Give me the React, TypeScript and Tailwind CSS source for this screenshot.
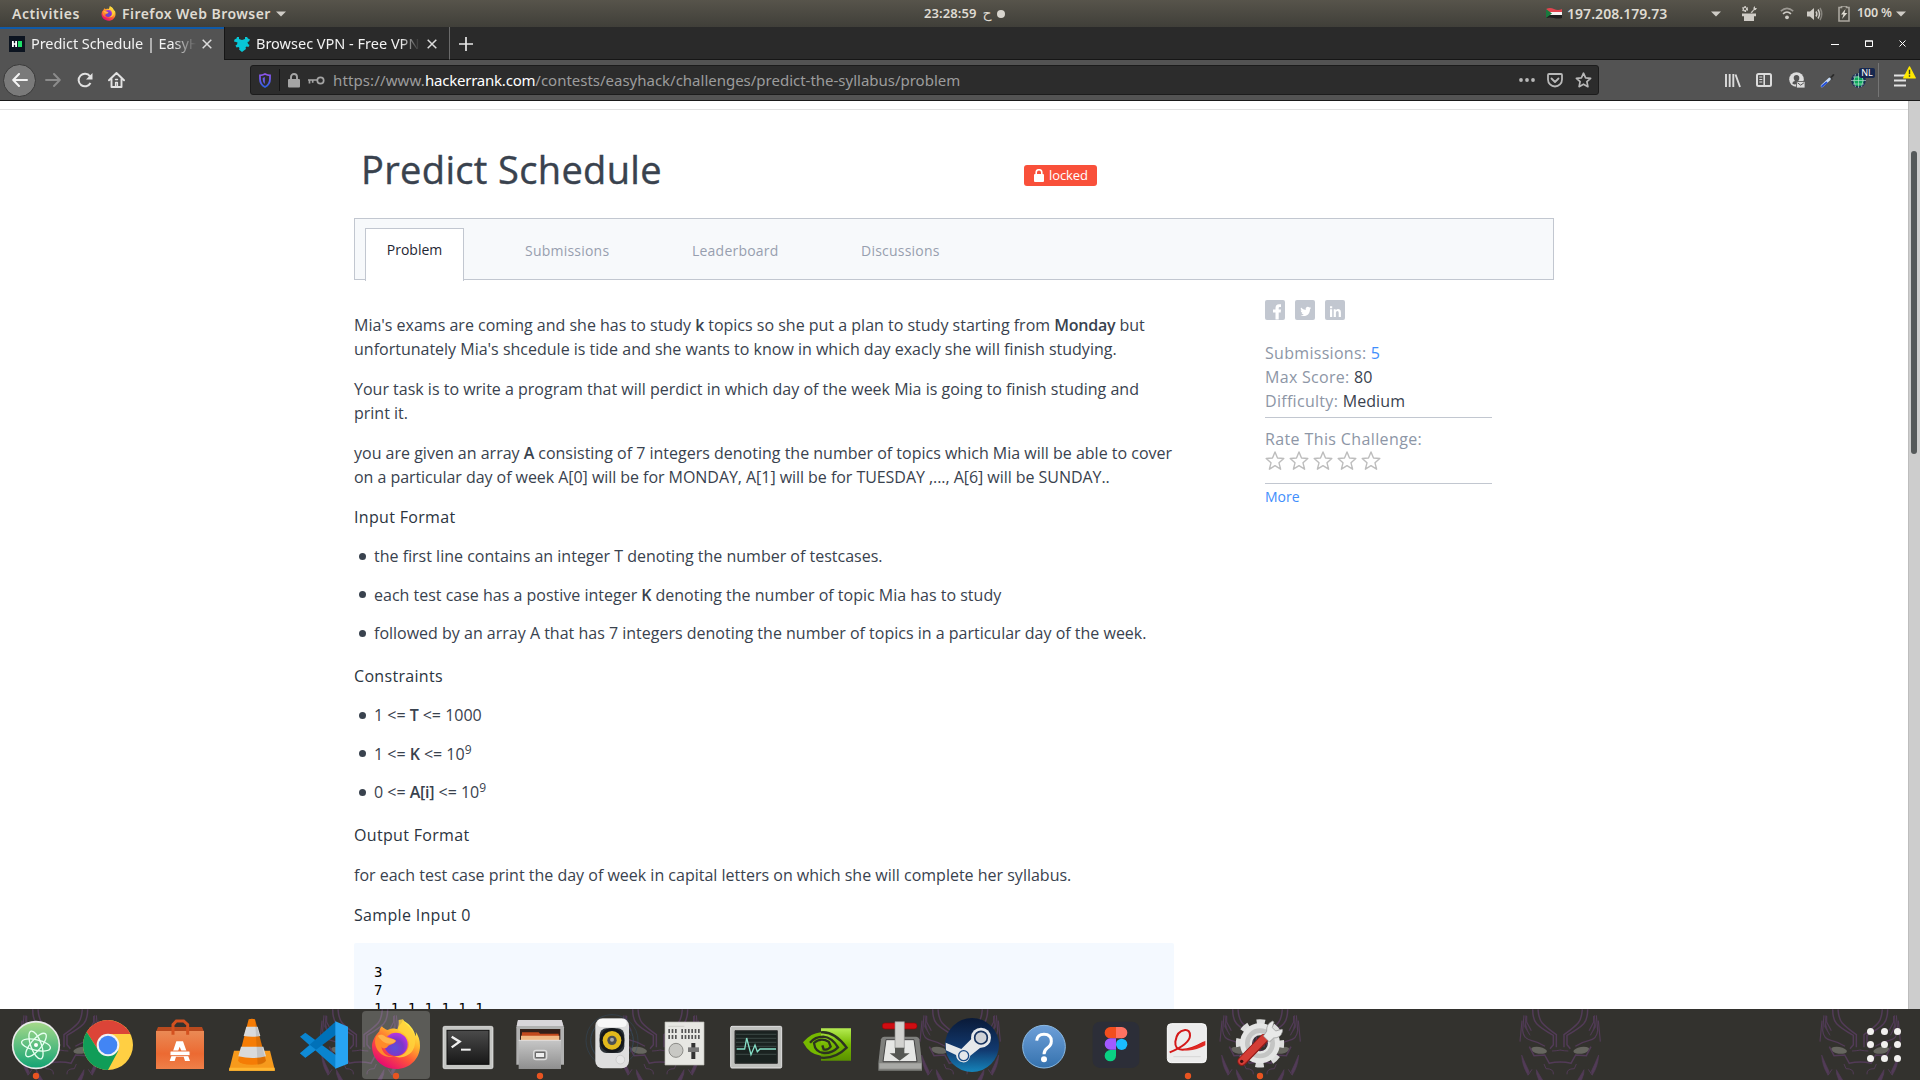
import type { ReactNode } from "react";

const UI = "font-['Noto_Sans','DejaVu_Sans',sans-serif]";

function Caret() {
  return (
    <svg width="10" height="6" viewBox="0 0 10 6" className="shrink-0">
      <path d="M0 .5h10L5 5.5z" fill="#cfccc6" />
    </svg>
  );
}

function FirefoxArt() {
  return (
    <>
      <defs>
        <linearGradient id="ffBody" x1=".8" y1=".1" x2=".25" y2=".95">
          <stop offset="0" stopColor="#fff44f" />
          <stop offset=".3" stopColor="#ffb52c" />
          <stop offset=".6" stopColor="#ff5a36" />
          <stop offset="1" stopColor="#e60a71" />
        </linearGradient>
        <radialGradient id="ffGlobe" cx=".45" cy=".65" r=".6">
          <stop offset="0" stopColor="#5b50d8" />
          <stop offset=".6" stopColor="#7d37c9" />
          <stop offset="1" stopColor="#b035df" />
        </radialGradient>
      </defs>
      <path
        d="M1209 58c-2 13-12 17-17 30-6-4-20-4-30 2-7-3-13-6-16-11-5 4-7 9-8 15-13 13-22 30-22 45 0 38 31 68 72 68s72-31 72-70c0-18-5-30-13-42 2 7 1 11 0 14-5-22-20-37-30-43-6-3-8-5-8-8z"
        fill="url(#ffBody)"
      />
      <circle cx="1188" cy="133" r="35" fill="url(#ffGlobe)" />
      <path d="M1196 60c2 18-4 20 0 32 16 6 33 21 31 42-3 24-24 38-45 34 14 9 42 3 55-15 18-26 4-60-12-75-8-8-13-11-16-20z" fill="#ffd23c" opacity=".85" />
      <path d="M1128 110c8-9 19-9 29-2 10 7 24 6 31 14-3 9-14 9-24 16-4 9-16 8-20 2 4 22 20 31 41 29-26 8-51-8-58-31-2-9-3-20 1-28z" fill="#ff8a2b" />
      <path d="M1134 107c8-4 15-3 22 3 9 6 24 5 31 13-6 8-13 8-19 8-13 0-20-6-26-13-4-4-7-7-8-11z" fill="#ffb24a" />
    </>
  );
}

function TopBar() {
  return (
    <div className="grid h-[27px] grid-cols-[1fr_auto_1fr] bg-linear-to-b from-[#57544b] to-[#403f39] text-[14px] font-semibold text-[#dfdbd2]">
      <div className="flex items-center pl-[12px]">
        <span className="w-[89px] tracking-[0.55px]">Activities</span>
        <svg width="15" height="15" viewBox="1114 56 148 154" className="mr-[6px]">
          <FirefoxArt />
        </svg>
        <span className="tracking-[0.45px]">Firefox Web Browser</span>
        <span className="ml-[5px] flex">
          <Caret />
        </span>
      </div>
      <div className="flex w-[84px] translate-x-[6px] items-center gap-[6px]">
        <span className="text-[13px] tracking-[0.1px]">23:28:59</span>
        <span className="w-[9px] shrink-0 font-['DejaVu_Sans',sans-serif] text-[14px] font-normal">ح</span>
        <span className="-ml-px size-[8px] shrink-0 rounded-full bg-[#d8d5ce]" />
      </div>
      <div className="flex items-center justify-end pr-[14px]">
        <svg width="16" height="11" viewBox="0 0 16 11" className="mr-[5px]">
          <path d="M0 1q4-2 8 0t8 0v3H0z" fill="#e0444f" />
          <path d="M0 4h16v3H0z" fill="#f4f4f4" />
          <path d="M0 7h16v3q-4 1-8 0t-8 0z" fill="#1f1f1f" />
          <path d="M0 1l6 4.500-6 4.500z" fill="#197a3e" />
        </svg>
        <span className="w-[144px] text-[14px] tracking-[0.05px]">197.208.179.73</span>
        <Caret />
        <svg width="16" height="17" viewBox="0 0 16 17" className="ml-[20px]" fill="#cfccc6">
          <circle cx="4" cy="4" r="2.300" fill="none" stroke="#cfccc6" strokeWidth="1.500" strokeDasharray="1.400 .9" />
          <circle cx="4" cy="4" r="1.600" fill="none" stroke="#cfccc6" />
          <path d="M9.500 7.500l3-3V2.500L14 1v2h2L14.700 5 13 5.300 11 8zM1 8.500h14v2.700H1zM3 11.200h10V16H3z" />
        </svg>
        <svg width="14" height="13" viewBox="0 0 14 13" className="ml-[23px]" fill="none" stroke="#cfccc6" strokeWidth="1.600">
          <path d="M.8 4.200Q7-1.300 13.200 4.200" opacity=".6" />
          <path d="M3 6.800q4-3.600 8 0" />
          <circle cx="7" cy="10.300" r="1.900" fill="#cfccc6" stroke="none" />
        </svg>
        <svg width="16" height="14" viewBox="0 0 16 14" className="ml-[13px]" fill="none" stroke="#cfccc6" strokeWidth="1.500">
          <path d="M0 4.500h3L7 1v12L3 9.500H0z" fill="#cfccc6" stroke="none" />
          <path d="M9 4.500q1.700 2.500 0 5M11 2.500q3 4.500 0 9" />
          <path d="M13 1q3.500 6 0 12" opacity=".45" />
        </svg>
        <svg width="12" height="16" viewBox="0 0 12 16" className="ml-[15px]">
          <path d="M3.500 1.500V0h5v1.500H11V15H1V1.500z" fill="none" stroke="#aaa79f" strokeWidth="1.600" />
          <path d="M7.500 3L3 8.500h2.500L4 13l5.300-6H6.500z" fill="#dfdbd2" />
        </svg>
        <span className="mr-[5px] ml-[7px] w-[34px] text-[12.500px] tracking-[-0.2px] whitespace-nowrap">100 %</span>
        <Caret />
      </div>
    </div>
  );
}

function CloseX() {
  return (
    <svg width="10" height="10" viewBox="0 0 10 10" className="shrink-0">
      <path d="M.7.7l8.600 8.600M9.300.7L.7 9.300" stroke="#dcdcdc" strokeWidth="1.500" />
    </svg>
  );
}

function TabStrip() {
  return (
    <div className="flex h-[33px] bg-[#2a2a2a] text-[15px] text-[#f2f2f2]">
      <div className="flex w-[224px] items-center border-t-2 border-[#0f5aa8] bg-[#535353] pb-[2px] pl-[9px]">
        <svg width="16" height="16" viewBox="0 0 16 16" className="shrink-0">
          <path d="M0 0h16v16H0z" fill="#0c1420" />
          <path d="M3 5h1.800v2.200h1.400V5H8v6H6.200V8.800H4.800V11H3z" fill="#fff" />
          <path d="M9 5h4v6H9z" fill="#1ee068" />
        </svg>
        <span className="ml-[6px] w-[165px] overflow-hidden mask-r-from-86% mask-r-to-100% text-[14.500px] tracking-[-0.06px] whitespace-nowrap">
          Predict Schedule | EasyHack
        </span>
        <span className="ml-[6px]">
          <CloseX />
        </span>
      </div>
      <div className="flex w-[226px] items-center border-r border-b border-l border-r-[#6a6a6a] border-b-[#161616] border-l-[#161616] pt-[1px] pl-[9px]">
        <svg width="16" height="16" viewBox="0 0 16 16" className="shrink-0" fill="#08c6d6">
          <path d="M3 1h2v2l3 1 3-1V1h2l1 1.500 2 1-1 2-1.500.5.500 2 1.500 1-1 2-2-.5-1 1 .5 1.500L8 16l-3-2.500.5-1.500-1-1-2 .5-1-2L3 8.500l.500-2L2 6 0 5.500l.500-2L2.500 2.500z" />
        </svg>
        <span className="ml-[6px] w-[164px] overflow-hidden mask-r-from-88% mask-r-to-100% text-[14.500px] whitespace-nowrap">
          Browsec VPN - Free VPN
        </span>
        <span className="ml-[7px]">
          <CloseX />
        </span>
      </div>
      <div className="flex flex-1 items-center justify-between border-b border-[#161616] pt-px pr-[14px] pl-[9px]">
        <svg width="14" height="14" viewBox="0 0 14 14">
          <path d="M7 0v14M0 7h14" stroke="#e8e8e8" strokeWidth="1.700" />
        </svg>
        <div className="flex items-center gap-[26px]">
          <svg width="8" height="8" viewBox="0 0 8 8"><path d="M0 4.500h8" stroke="#fff" /></svg>
          <svg width="8" height="7" viewBox="0 0 8 7"><path d="M.5 1h7v5.500h-7zM0 1h8" fill="none" stroke="#fff" /></svg>
          <svg width="7" height="7" viewBox="0 0 7 7"><path d="M.5.5l6 6M6.500.5l-6 6" stroke="#fff" /></svg>
        </div>
      </div>
    </div>
  );
}

function NavBar() {
  return (
    <div className="flex h-[41px] items-center border-b border-[#1a1a1a] bg-[#535353]">
      <div className="ml-[3px] flex size-[33px] items-center justify-center rounded-full border border-[#3a3a3a] bg-[#7a7a7a]">
        <svg width="16" height="14" viewBox="0 0 16 14" fill="none" stroke="#f3f3f3" strokeWidth="2" strokeLinecap="round" strokeLinejoin="round">
          <path d="M15 7H1.500M7 1L1.200 7 7 13" />
        </svg>
      </div>
      <svg width="16" height="14" viewBox="0 0 16 14" className="ml-[9px]" fill="none" stroke="#8c8c8c" strokeWidth="1.900" strokeLinecap="round" strokeLinejoin="round">
        <path d="M1 7h13.500M9 1l5.800 6L9 13" />
      </svg>
      <svg width="16" height="16" viewBox="0 0 16 16" className="ml-[16px]">
        <path d="M13.500 11A6.300 6.300 0 1 1 13 4.300" fill="none" stroke="#e2e2e2" strokeWidth="2" />
        <path d="M15.500 1v6.500H9z" fill="#e2e2e2" />
      </svg>
      <svg width="17" height="16" viewBox="0 0 17 16" className="ml-[15px]" fill="none" stroke="#e2e2e2" strokeWidth="1.900" strokeLinejoin="round" strokeLinecap="round">
        <path d="M1 8.300L8.500 1 16 8.300M3.500 7v8h10V7" />
        <path d="M7.600 15v-4.500h1.800V15M7.500 7.500h2" strokeWidth="1.400" />
      </svg>
      <div className="ml-[125px] flex h-[30px] w-[1349px] items-center rounded-[3px] border border-[#1c1c1c] bg-[#2c2c2c] pl-[8px]">
        <svg width="12" height="15" viewBox="0 0 12 15">
          <defs>
            <linearGradient id="shield" x1="0" y1="0" x2="0" y2="1">
              <stop offset="0" stopColor="#8f55ec" />
              <stop offset="1" stopColor="#2f5fe0" />
            </linearGradient>
          </defs>
          <path d="M6 1Q3.500 2.300 1 2.300V6q0 5.500 5 8 5-2.500 5-8V2.300Q8.500 2.300 6 1z" fill="none" stroke="url(#shield)" strokeWidth="1.800" />
          <path d="M5.800 4v7Q3.600 9.300 3.700 5z" fill="#6a5ce8" />
        </svg>
        <span className="ml-[8px] h-[22px] w-px bg-[#151515]" />
        <svg width="12" height="15" viewBox="0 0 12 15" className="ml-[8px]">
          <path d="M0 7q0-1 1-1h10q1 0 1 1v6.500q0 1-1 1H1q-1 0-1-1z" fill="#a5a5a5" />
          <path d="M3 7V4a3 3 0 0 1 6 0v3" fill="none" stroke="#a5a5a5" strokeWidth="1.900" />
        </svg>
        <svg width="17" height="9" viewBox="0 0 17 9" className="ml-[8px]" fill="none" stroke="#a5a5a5" strokeWidth="1.700">
          <circle cx="12.500" cy="4.500" r="3.200" />
          <path d="M9.200 4H0M1.500 4v3.500M4.700 4v2.700" />
        </svg>
        <div className="ml-[8px] flex-1 text-[15px] whitespace-nowrap text-[#9c9c9c]">
          <span className="tracking-[0.12px]">https://www.</span>
          <span className="tracking-[-0.22px] text-white">hackerrank.com</span>
          <span className="tracking-[-0.01px]">/contests/easyhack/challenges/predict-the-syllabus/problem</span>
        </div>
        <div className="mr-[6px] flex items-center">
          <svg width="16" height="4" viewBox="0 0 16 4" fill="#b8b8b8">
            <circle cx="2" cy="2" r="1.900" /><circle cx="8" cy="2" r="1.900" /><circle cx="14" cy="2" r="1.900" />
          </svg>
          <svg width="16" height="15" viewBox="0 0 16 15" className="ml-[12px]" fill="none" stroke="#b8b8b8" strokeWidth="1.800" strokeLinecap="round" strokeLinejoin="round">
            <path d="M2 1h12q1 0 1 1v4.500a7 7 0 0 1-14 0V2q0-1 1-1z" />
            <path d="M4.500 5.500L8 9l3.500-3.500" />
          </svg>
          <svg width="17" height="16" viewBox="0 0 17 16" className="ml-[12px]" fill="none" stroke="#b8b8b8" strokeWidth="1.700" strokeLinejoin="round">
            <path d="M8.500 1.200l2.100 4.600 5 .5-3.700 3.400 1 5-4.400-2.500-4.400 2.500 1-5L1.400 6.300l5-.5z" />
          </svg>
        </div>
      </div>
      <svg width="16" height="15" viewBox="0 0 16 15" className="ml-[126px]" fill="none" stroke="#dcdcdc" strokeWidth="1.900">
        <path d="M1 1v13M4.700 1v13M8.300 1v13M10.500 1.500L15 14" />
      </svg>
      <svg width="16" height="14" viewBox="0 0 16 14" className="ml-[15px]" fill="none" stroke="#dcdcdc">
        <rect x="1" y="1" width="14" height="12" rx="1.500" strokeWidth="2" />
        <path d="M8.200 1v12" strokeWidth="1.600" />
        <path d="M3.300 4h3M3.300 6.500h3M3.300 9h3" strokeWidth="1" />
      </svg>
      <svg width="16" height="16" viewBox="0 0 16 16" className="ml-[17px]">
        <circle cx="7.500" cy="7.500" r="7.300" fill="#dcdcdc" />
        <path d="M7.500 3a3 3 0 0 1 2.800 3.200q0 1.500-1 2.500v2q-3 3-6 .8L4 9.800q2-.2 1.800-1.300Q4.600 7.400 4.700 6A3 3 0 0 1 7.500 3z" fill="#535353" />
        <path d="M7.500 9.500H16V16H7.500z" fill="#dcdcdc" stroke="#535353" strokeWidth=".8" />
        <path d="M8.500 10.800l3.200 2.400 3.200-2.400" fill="none" stroke="#535353" />
      </svg>
      <svg width="15" height="15" viewBox="0 0 15 15" className="ml-[15px]">
        <path d="M8.500 6.500l4-5q1.500-1 2 .5l-4.500 5z" fill="#1d1d1d" opacity=".75" />
        <path d="M9.500 3.500l3 3" stroke="#3a3a3a" strokeWidth="1.500" />
        <path d="M9.500 6L2 13" stroke="#c9dcf5" strokeWidth="2.600" strokeLinecap="round" />
        <path d="M6.500 9.500L2 13.200" stroke="#2550d8" strokeWidth="1.900" strokeLinecap="round" />
      </svg>
      <div className="relative ml-[16px] h-[15px] w-[16px]">
        <svg width="15" height="15" viewBox="0 0 15 15">
          <circle cx="7.500" cy="7.500" r="7.300" fill="#1c2c55" />
          <circle cx="7.500" cy="8" r="5.200" fill="#0ea85b" />
          <path d="M7.500 0v15M0 7.500h15M2 4h11M2 11h11M4.500 1q-3 6.500 0 13M10.500 1q3 6.500 0 13" fill="none" stroke="#c7e7dc" strokeWidth=".6" />
        </svg>
        <span className="absolute -top-[5px] left-[8px] flex h-[10px] w-[16px] items-center justify-center rounded-[2px] bg-[#17284f] text-[9px] leading-none text-white">NL</span>
      </div>
      <span className="ml-[11px] h-[34px] w-px bg-[#757575]" />
      <div className="relative ml-[15px] h-[13px] w-[12px]">
        <svg width="12" height="13" viewBox="0 0 12 13"><path d="M0 1.500h12M0 6.500h12M0 11.500h12" stroke="#e2e2e2" strokeWidth="2" /></svg>
        <svg width="13" height="13" viewBox="0 0 13 13" className="absolute -top-[8px] left-[9px]">
          <path d="M6.500.8L12.300 12H.7z" fill="#ffe900" stroke="#ffe900" strokeWidth="1.200" strokeLinejoin="round" />
          <path d="M6.500 3.800v4.400M6.500 9.300v1.500" stroke="#3e3e20" strokeWidth="1.400" />
        </svg>
      </div>
    </div>
  );
}

function Bullets({ items }: { items: ReactNode[] }) {
  return (
    <ul className="mt-[15px] flex flex-col gap-[14.500px]">
      {items.map((it, i) => (
        <li key={i} className="flex h-[24px] items-center">
          <span className="mr-[8px] ml-[5px] size-[7px] rounded-full bg-[#39424e]" />
          <span>{it}</span>
        </li>
      ))}
    </ul>
  );
}

function B({ children }: { children: ReactNode }) {
  return <span className="font-semibold tracking-[-0.25px] text-[#39424e]">{children}</span>;
}

function Sup() {
  return <sup className="-top-[6px] text-[12px]">9</sup>;
}

function Heading({ children, className = "" }: { children: ReactNode; className?: string }) {
  return <h3 className={`font-medium tracking-[0.32px] text-[#2b3440] ${className}`}>{children}</h3>;
}

function Statement() {
  return (
    <div className="w-[820px] pt-[33px] text-[16px] leading-[24px] whitespace-nowrap text-[#39424e]">
      <p>
        Mia's exams are coming and she has to study <B>k</B> topics so she put a plan to study starting from <B>Monday</B> but
        <br />
        unfortunately Mia's shcedule is tide and she wants to know in which day exacly she will finish studying.
      </p>
      <p className="mt-[16px]">
        Your task is to write a program that will perdict in which day of the week Mia is going to finish studing and
        <br />
        print it.
      </p>
      <p className="mt-[16px]">
        you are given an array <B>A</B> consisting of 7 integers denoting the number of topics which Mia will be able to cover
        <br />
        <span className="tracking-[-0.05px]">on a particular day of week A[0] will be for MONDAY, A[1] will be for TUESDAY ,..., A[6] will be SUNDAY..</span>
      </p>
      <Heading className="mt-[16px]">Input Format</Heading>
      <Bullets
        items={[
          "the first line contains an integer T denoting the number of testcases.",
          <>each test case has a postive integer <B>K</B> denoting the number of topic Mia has to study</>,
          "followed by an array A that has 7 integers denoting the number of topics in a particular day of the week.",
        ]}
      />
      <Heading className="mt-[19px]">Constraints</Heading>
      <Bullets
        items={[
          <>1 &lt;= <B>T</B> &lt;= 1000</>,
          <>1 &lt;= <B>K</B> &lt;= 10<Sup /></>,
          <>0 &lt;= <B>A[i]</B> &lt;= 10<Sup /></>,
        ]}
      />
      <Heading className="mt-[19px]">Output Format</Heading>
      <p className="mt-[16px]">for each test case print the day of week in capital letters on which she will complete her syllabus.</p>
      <Heading className="mt-[16px]">Sample Input 0</Heading>
      <pre className="mt-[16px] h-[160px] rounded-[2px] bg-[#f4f9ff] px-[20px] pt-[20px] font-['DejaVu_Sans_Mono',monospace] text-[14px] leading-[18px] text-black">
        {"3\n7\n1 1 1 1 1 1 1"}
      </pre>
    </div>
  );
}

function Social({ children }: { children: ReactNode }) {
  return (
    <svg width="20" height="20" viewBox="0 0 20 20">
      <rect width="20" height="20" rx="2" fill="#c2c7d0" />
      {children}
    </svg>
  );
}

function Sidebar() {
  return (
    <aside className="ml-[91px] w-[227px] pt-[20px] text-[16px] leading-[24px] tracking-[0.3px] text-[#8d96a6]">
      <div className="flex gap-[10px]">
        <Social><path d="M10.500 19.500v-7H8v-3h2.500V8q0-3.800 3.500-3.800h2v2.800h-1.300q-1 0-1 1v1.500H16l-.3 3h-2v7z" fill="#fff" /></Social>
        <Social><path d="M5.500 14.500q2 .1 3.300-1-1.700-.2-2.300-1.600h1q-1.800-.7-1.800-2.500l1 .2Q5 8.200 6 6.500q2 2.300 4.700 2.400-.3-3 2.100-3.200.9 0 1.600.7l1.500-.6-1 1.400 1.300-.3-1.200 1.300q0 4.500-3.500 6.300-3 1.200-6-.0z" fill="#fff" transform="translate(0 1)" /></Social>
        <Social><path d="M5 9.300h2.200V17H5zM5 6.300h2.200v2H5zM8.700 9.300h2v1q2-2 4-.8 1.200.8 1.200 2.700V17h-2.200v-4.300q0-1.700-1.300-1.700-1.500 0-1.500 1.800V17H8.700z" fill="#fff" /></Social>
      </div>
      <div className="mt-[21px]">Submissions: <span className="text-[#3f8efc]">5</span></div>
      <div>Max Score: <span className="tracking-normal text-[#39424e]">80</span></div>
      <div>Difficulty: <span className="tracking-[0.1px] text-[#39424e]">Medium</span></div>
      <div className="mt-[4px] border-t border-[#c2c7d0] pt-[9px] tracking-[0.38px]">Rate This Challenge:</div>
      <div className="-mt-px flex h-[21px] gap-[4px]">
        {[0, 1, 2, 3, 4].map((i) => (
          <svg key={i} width="20" height="21" viewBox="0 0 20 21" fill="none" stroke="#bdbdbd" strokeWidth="1.400" strokeLinejoin="round">
            <path d="M10 2l2.500 6 6.300.5L14 12.800l1.600 6.400-5.600-3.500-5.600 3.500L6 12.800 1.200 8.500 7.500 8z" />
          </svg>
        ))}
      </div>
      <div className="mt-[12px] border-t border-[#c2c7d0] pt-[1px] text-[14px] tracking-normal text-[#3f8efc]">More</div>
    </aside>
  );
}

function Page() {
  return (
    <div className="flex h-[908px] bg-white font-['Open_Sans','Noto_Sans',sans-serif]">
      <div className="flex-1 overflow-hidden">
        <div className="h-[9px] border-b border-[#e2e2e2]" />
        <div className="ml-[354px] w-[1200px]">
          <div className="flex h-[108px] items-start">
            <h1 className="ml-[7px] w-[663px] pt-[33px] text-[38px] leading-[52px] tracking-[0.35px] text-[#39424e] [-webkit-text-stroke:0.4px_#39424e]">Predict Schedule</h1>
            <span className="mt-[55px] flex h-[21px] w-[73px] items-center rounded-[3px] bg-[#f9503a] pl-[10px] text-[13px] tracking-[-0.1px] text-white">
              <svg width="10" height="13" viewBox="0 0 10 13" className="mr-[5px]">
                <path d="M0 6q0-1 1-1h8q1 0 1 1v6q0 1-1 1H1q-1 0-1-1z" fill="#fff" />
                <path d="M2.200 6V3.500a2.800 2.800 0 0 1 5.600 0V6" fill="none" stroke="#fff" strokeWidth="1.600" />
              </svg>
              locked
            </span>
          </div>
          <div className="flex h-[62px] items-end border border-[#c2c7d0] bg-[#f7f9fb] text-[14px] tracking-[0.22px] text-[#979faf]">
            <div className="-mb-[2px] ml-[10px] flex h-[53px] w-[99px] items-center justify-center border border-b-0 border-[#c2c7d0] bg-white pb-[11px] font-medium tracking-normal text-[#1f2733]">Problem</div>
            <div className="flex h-[60px] flex-1 items-center pt-[2px]">
              <span className="ml-[61px] w-[167px]">Submissions</span>
              <span className="w-[169px]">Leaderboard</span>
              <span>Discussions</span>
            </div>
          </div>
          <div className="flex">
            <Statement />
            <Sidebar />
          </div>
        </div>
      </div>
      <div className="w-[12px] border-l border-[#bdbdbd] bg-[#cdcdcd] pt-[50px] pl-[2px]">
        <div className="h-[303px] w-[6px] rounded-full bg-[#55595a]" />
      </div>
    </div>
  );
}

function Mask() {
  return (
    <svg width="300" height="71" viewBox="-150 27 900 213" className="shrink-0">
      <ellipse cx="237" cy="151" rx="24" ry="10" transform="rotate(9 237 151)" fill="#66665f" />
      <ellipse cx="364" cy="151" rx="24" ry="10" transform="rotate(-9 364 151)" fill="#66665f" />
      {[0, 1].map((s) => (
        <g key={s} transform={s ? "translate(601 0) scale(-1 1)" : undefined} fill="none" stroke="#523b57" strokeWidth="4.500">
          <path d="M218 28q0 30 12 43t50 35v28l-10 12M234 28q2 28 12 40t43 36v38" />
          <path d="M208 140l14 27 32-2 14 25q15-4 33-4" />
          <path d="M192 46l-4 45q2 25 25 30t42 18M186 62l-6 63M200 48v18l14 26" strokeWidth="3.500" />
          <path d="M198 46q-6 30 12 60l-16-26z" fill="#523b57" strokeWidth="2" />
          <path d="M185 165q2 34 19 60l3-11q-10-20-22-49z" fill="#523b57" strokeWidth="2" />
          <path d="M229 209l20 33h-12l-7-20z" fill="#523b57" strokeWidth="2" />
          <path d="M204 226l12-18M252 192l6 14q24 0 22 17M276 153q12 0 25-3" strokeWidth="3" />
        </g>
      ))}
    </svg>
  );
}

const icons: { off: number; dot?: boolean; active?: boolean; art: ReactNode }[] = [
  {
    off: 0, dot: true,
    art: (
      <>
        <linearGradient id="atom" x1="0" y1="0" x2="0" y2="1"><stop offset="0" stopColor="#a7d98a" /><stop offset="1" stopColor="#12a374" /></linearGradient>
        <circle cx="108" cy="135" r="70" fill="url(#atom)" stroke="#e9e9e9" strokeWidth="5" />
        <g fill="none" stroke="#e6fff0" strokeWidth="4">
          <ellipse cx="108" cy="135" rx="44" ry="16" transform="rotate(12 108 135)" />
          <ellipse cx="108" cy="135" rx="44" ry="16" transform="rotate(70 108 135)" />
          <ellipse cx="108" cy="135" rx="44" ry="16" transform="rotate(130 108 135)" />
        </g>
        <circle cx="108" cy="135" r="6" fill="#fff" />
      </>
    ),
  },
  {
    off: 0,
    art: (
      <>
        <circle cx="324" cy="135" r="75" fill="#ffcf43" />
        <path d="M324 135V102h67A75 75 0 0 0 260 96l36 56z" fill="#dc4437" />
        <path d="M260 96A75 75 0 0 0 324 210l31-58-59 0z" fill="#109d58" />
        <path d="M324 210l32-58z" fill="#109d58" />
        <circle cx="324" cy="135" r="34" fill="#f2f2f2" />
        <circle cx="324" cy="135" r="28" fill="#4285f4" />
      </>
    ),
  },
  {
    off: 0,
    art: (
      <>
        <linearGradient id="bag" x1="0" y1="0" x2="0" y2="1"><stop offset="0" stopColor="#ea8a55" /><stop offset=".6" stopColor="#ec6a32" /><stop offset="1" stopColor="#ef8049" /></linearGradient>
        <path d="M474 81h132l6 14H468z" fill="#b94a1e" />
        <path d="M468 93h144v114H468z" fill="url(#bag)" />
        <path d="M519 104V74l10-11h22l12 11v30" fill="none" stroke="#d4511f" strokeWidth="9" />
        <path d="M529 124h20l21 59h-15l-4-13h-23l-4 13h-15zm10 16l-7 20h15z" fill="#fff" />
        <rect x="510" y="153" width="60" height="14" rx="3" fill="#fff" stroke="#e9703c" strokeWidth="3" />
      </>
    ),
  },
  {
    off: 0,
    art: (
      <>
        <path d="M702 152h108l15 60H687z" fill="#f79a1c" />
        <path d="M688 203h136v9H687z" fill="#ffb732" />
        <path d="M746 58q10-3 19 0l33 124q-8 12-42 12t-42-12z" fill="#f57c05" />
        <path d="M739 80h34l8 28q-25 5-50 0zM723 140h67l8 29q-40 10-83 0z" fill="#d9dadb" />
        <path d="M765 58l33 124q-8 12-25 12z" fill="#000" opacity=".1" />
      </>
    ),
  },
  {
    off: 0,
    art: (
      <>
        <path d="M900 110l16-12 92 68v40z" fill="#0a84cf" />
        <path d="M900 160l16 13 92-69V64z" fill="#0071b9" />
        <path d="M1006 64l38 16v111l-38 15z" fill="#27a4f2" />
        <path d="M900 160l16 13 32-24-18-14z" fill="#108bd6" />
      </>
    ),
  },
  { off: 0, dot: true, active: true, art: <FirefoxArt /> },
  {
    off: 0,
    art: (
      <>
        <linearGradient id="term" x1="0" y1="0" x2="0" y2="1"><stop offset="0" stopColor="#4b4b4b" /><stop offset="1" stopColor="#181818" /></linearGradient>
        <rect x="1329" y="79" width="150" height="127" rx="5" fill="#c5c6c3" stroke="#eee" strokeWidth="2" />
        <rect x="1341" y="91" width="126" height="102" fill="url(#term)" stroke="#111" strokeWidth="3" />
        <path d="M1355 110l24 15-24 17" fill="none" stroke="#f0f0f0" strokeWidth="7" />
        <path d="M1383 149h29" stroke="#f0f0f0" strokeWidth="6" />
      </>
    ),
  },
  {
    off: 1470, dot: true,
    art: (
      <>
        <linearGradient id="cab" x1="0" y1="0" x2="0" y2="1"><stop offset="0" stopColor="#c6c6c6" /><stop offset="1" stopColor="#8f8f8f" /></linearGradient>
        <path d="M84 60h131l7 22v112H79V82z" fill="#b1b1b1" />
        <path d="M84 60h131l5 18H80z" fill="#d9d6da" />
        <path d="M90 87h121v36H90z" fill="#33201a" />
        <path d="M96 97h50l4 4h56v22H94z" fill="#c2491d" />
        <path d="M93 107h115v14H93z" fill="#f0b884" />
        <path d="M86 121h127v86H86z" fill="url(#cab)" />
        <path d="M86 121h127" stroke="#e3e3e3" strokeWidth="3" />
        <rect x="131" y="151" width="39" height="28" rx="7" fill="#999" stroke="#ddd" strokeWidth="4" />
        <rect x="137" y="158" width="27" height="14" fill="#eee" stroke="#444" strokeWidth="2" />
      </>
    ),
  },
  {
    off: 1470,
    art: (
      <>
        <g fill="none" stroke="#35506a" strokeWidth="3" opacity=".7"><circle cx="366" cy="122" r="64" /><circle cx="366" cy="122" r="78" opacity=".6" /></g>
        <rect x="316" y="55" width="101" height="150" rx="22" fill="#dedede" />
        <rect x="322" y="57" width="88" height="24" rx="12" fill="#f8f8f8" />
        <rect x="329" y="85" width="74" height="74" rx="20" fill="#2b3136" />
        <circle cx="366" cy="121" r="37" fill="#15181b" />
        <circle cx="366" cy="121" r="28" fill="#e3b91c" />
        <circle cx="366" cy="121" r="14" fill="#4c4f52" />
        <circle cx="366" cy="119" r="6" fill="#aaa" />
        <circle cx="391" cy="179" r="13" fill="#e6e6e6" stroke="#c2c2c2" strokeWidth="2" />
      </>
    ),
  },
  {
    off: 1470,
    art: (
      <>
        <path d="M525 66h117v129H525z" fill="#e7e7e3" stroke="#b9b9b4" strokeWidth="2" />
        <path d="M535 79h48" stroke="#c6c6c0" strokeWidth="2" />
        <path d="M535 93h26M574 93h56M535 111h26M574 111h56" stroke="#555" strokeWidth="12" strokeDasharray="5 5" />
        <circle cx="558" cy="151" r="21" fill="#c8c8c4" stroke="#8c8c88" strokeWidth="3" />
        <path d="M610 129v48" stroke="#333" strokeWidth="12" />
        <path d="M594 142h33v14h-33z" fill="#777" />
      </>
    ),
  },
  {
    off: 1470,
    art: (
      <>
        <rect x="722" y="79" width="153" height="125" rx="4" fill="#bfc0bd" stroke="#e2e2e2" strokeWidth="3" />
        <path d="M735 92h127v98H735z" fill="#1a2220" stroke="#333" strokeWidth="3" />
        <path d="M738 103h121M738 115h121M738 127h121M738 139h121M738 163h121" stroke="#34403d" strokeWidth="4" />
        <path d="M740 147h24l6-33 13 50 12-29 7 20 8-8h48" fill="none" stroke="#86e0c8" strokeWidth="4" />
      </>
    ),
  },
  {
    off: 1470,
    art: (
      <>
        <linearGradient id="nv" x1="0" y1="0" x2="0" y2="1"><stop offset="0" stopColor="#b5ec52" /><stop offset=".5" stopColor="#76b900" /><stop offset="1" stopColor="#5a9000" /></linearGradient>
        <path d="M993 85h90v97h-90z" fill="url(#nv)" />
        <path d="M939 127q24-28 54-30v70q-34-2-54-40z" fill="#76b900" />
        <g fill="none" stroke="#2c3320" strokeWidth="7">
          <path d="M993 97q40-4 77 46-34 34-77 30" />
          <path d="M960 128q15-18 40-18 25 2 44 32-18 18-42 17-27-2-30-30 20-18 44-4l6 15q-9 12-21 8l-4-12" />
        </g>
      </>
    ),
  },
  {
    off: 1470,
    art: (
      <>
        <path d="M1182 110h97q7 0 9 8l8 72v22h-131v-22l8-72q2-8 9-8z" fill="#7f807d" />
        <path d="M1188 119h84l9 66h-102z" fill="#e6e7e5" stroke="#444" strokeWidth="3" />
        <path d="M1168 190h126v16h-126z" fill="#a8a9a6" />
        <rect x="1177" y="69" width="104" height="18" rx="8" fill="#cf0d12" stroke="#8f0808" strokeWidth="2" />
        <path d="M1215 65h28v80h-28z" fill="#d2d2cf" stroke="#888" strokeWidth="2" />
        <path d="M1215 143h28v17h16l-30 22-30-22h16z" fill="#555753" />
      </>
    ),
  },
  {
    off: 1470,
    art: (
      <>
        <linearGradient id="steam" x1="0" y1="0" x2="0" y2="1"><stop offset="0" stopColor="#0a1a38" /><stop offset=".6" stopColor="#123a70" /><stop offset="1" stopColor="#1585bb" /></linearGradient>
        <circle cx="1446" cy="135" r="81" fill="url(#steam)" />
        <path d="M1367 128l47 19 36-36 34 22-43 34q-6 22-23 20-18-3-20-22l-30-14z" fill="#e6e8ea" />
        <circle cx="1473" cy="113" r="30" fill="#e6e8ea" />
        <circle cx="1473" cy="113" r="19" fill="#cfd2d6" stroke="#17325e" strokeWidth="5" />
        <circle cx="1421" cy="167" r="15" fill="none" stroke="#1a4a86" strokeWidth="4" />
      </>
    ),
  },
  {
    off: 2940,
    art: (
      <>
        <linearGradient id="help" x1="0" y1="0" x2="0" y2="1"><stop offset="0" stopColor="#6d9fd8" /><stop offset="1" stopColor="#3572ae" /></linearGradient>
        <circle cx="192" cy="140" r="64" fill="url(#help)" stroke="#8cbae2" strokeWidth="3" />
        <path d="M170 122q2-19 22-19 22 0 22 21 0 12-12 20-10 7-10 19" fill="none" stroke="#fff" strokeWidth="9" />
        <circle cx="192" cy="178" r="9" fill="#fff" />
      </>
    ),
  },
  {
    off: 2940,
    art: (
      <>
        <rect x="338" y="65" width="140" height="139" rx="22" fill="#2c2e38" />
        <path d="M408 81h-17a17 17 0 0 0 0 34h17z" fill="#f24e1e" />
        <path d="M408 81h17a17 17 0 0 1 0 34h-17z" fill="#ff7262" />
        <path d="M408 115h-17a17 17 0 0 0 0 34h17z" fill="#a259ff" />
        <circle cx="425" cy="133" r="17" fill="#1abcfe" />
        <path d="M408 150h-17a17 17 0 1 0 17 17z" fill="#0acf83" />
      </>
    ),
  },
  {
    off: 2940, dot: true,
    art: (
      <>
        <rect x="562" y="71" width="117" height="117" rx="12" fill="#ececec" stroke="#fff" strokeWidth="3" />
        <path d="M569 157q60-25 61-50 0-18-15-17-25 3-29 35-2 24 21 24 26 0 65-22" fill="none" stroke="#d41818" strokeWidth="6" />
        <path d="M612 148q30-2 64-26v14q-30 18-60 15z" fill="#e02a24" />
        <path d="M580 170h82" stroke="#ccc" strokeWidth="2" />
      </>
    ),
  },
  {
    off: 2940, dot: true,
    art: (
      <>
        <circle cx="840" cy="130" r="64" fill="none" stroke="#dcdddc" strokeWidth="17" strokeDasharray="25 25.260" strokeDashoffset="12" />
        <circle cx="840" cy="130" r="42" fill="none" stroke="#e4e5e4" strokeWidth="36" />
        <circle cx="840" cy="130" r="38" fill="none" stroke="#c4c5c4" strokeWidth="14" />
        <path d="M786 184l66-68" stroke="#8f1a17" strokeWidth="28" strokeLinecap="round" />
        <path d="M786 183l66-68" stroke="#d43d35" strokeWidth="22" strokeLinecap="round" />
        <circle cx="785" cy="184" r="5" fill="#3b1010" />
        <path d="M850 108l10-14q-2-22 18-31l4 3-5 17 10 10 17-5q6-2 3 8-5 18-26 18l-13 12z" fill="#e8e9e8" stroke="#8d8d8d" strokeWidth="2" />
      </>
    ),
  },
];

function Dock() {
  return (
    <div className="relative h-[71px] overflow-hidden bg-[#33322e]">
      <div className="absolute inset-0 flex">
        <div className="-ml-[90px] flex">
          {[0, 1, 2, 3, 4, 5, 6].map((i) => (
            <Mask key={i} />
          ))}
        </div>
      </div>
      <div className="relative flex h-full items-center justify-between pr-[19px]">
        <div className="flex h-full">
          {icons.map((ic, i) => (
            <div key={i} className="flex h-full w-[72px] flex-col items-center pt-[2px]">
              <div className={ic.active ? "h-[68px] w-[68px] rounded-[4px] bg-white/20" : "h-[68px] w-[68px]"}>
                <svg width="72" height="71" viewBox={`${i * 216 - ic.off} 27 216 213`} className="-mt-[2px] -ml-[2px] max-w-none">
                  {ic.art}
                  {ic.dot && <circle cx={i * 216 - ic.off + 108} cy="228" r="9.500" fill="#e95420" />}
                </svg>
              </div>
            </div>
          ))}
        </div>
        <div className="grid grid-cols-3 gap-[6.500px]">
          {[0, 1, 2, 3, 4, 5, 6, 7, 8].map((i) => (
            <span key={i} className="size-[7px] rounded-full bg-[#f2f1ef]" />
          ))}
        </div>
      </div>
    </div>
  );
}

export default function App() {
  return (
    <div className={`flex h-[1080px] w-[1920px] flex-col overflow-hidden ${UI}`}>
      <TopBar />
      <TabStrip />
      <NavBar />
      <Page />
      <Dock />
    </div>
  );
}
